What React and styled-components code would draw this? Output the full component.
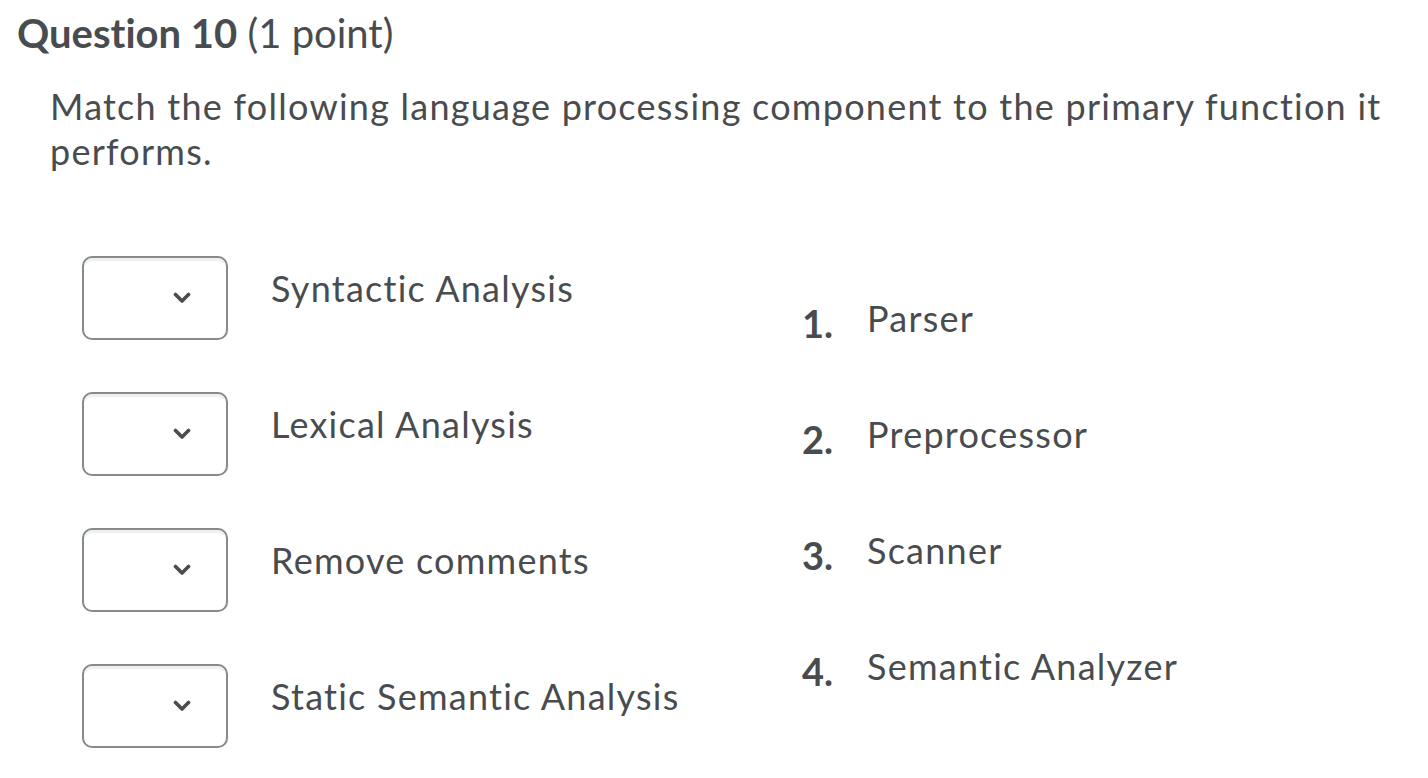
import React from "react";
import styled, { createGlobalStyle } from "styled-components";

const GlobalStyle = createGlobalStyle`
  body {
    margin: 0;
    background: #ffffff;
    color: #494c4e;
    font-family: Lato, "Open Sans", sans-serif;
    font-variant-ligatures: none;
  }
`;

const choices = [
  "Syntactic Analysis",
  "Lexical Analysis",
  "Remove comments",
  "Static Semantic Analysis",
];

const answers = ["Parser", "Preprocessor", "Scanner", "Semantic Analyzer"];

function Chevron() {
  return (
    <svg width="18" height="12" viewBox="0 0 18 12">
      <path
        d="M2.5 2.5 L9 9 L15.5 2.5"
        fill="none"
        stroke="#494c4e"
        strokeWidth="3.6"
        strokeLinecap="round"
        strokeLinejoin="round"
      />
    </svg>
  );
}

function App() {
  return (
    <Page>
      <GlobalStyle />
      <Title>
        <strong>Question 10</strong> (1 point)
      </Title>
      <Prompt>
        Match the following language processing component to the primary
        function it performs.
      </Prompt>
      <MatchArea>
        <Choices>
          {choices.map((text) => (
            <ChoiceRow key={text}>
              <SelectBox>
                <Chevron />
              </SelectBox>
              <ChoiceLabel>{text}</ChoiceLabel>
            </ChoiceRow>
          ))}
        </Choices>
        <Answers>
          {answers.map((text, i) => (
            <AnswerItem key={text}>
              <AnswerNumber>{i + 1}.</AnswerNumber>
              {text}
            </AnswerItem>
          ))}
        </Answers>
      </MatchArea>
    </Page>
  );
}

export default App;

const Page = styled.div`
  padding: 9px 0 0 17px;
`;

const Title = styled.h2`
  margin: 0;
  font-size: 40px;
  line-height: 48px;
  font-weight: 400;

  strong {
    font-weight: 700;
  }
`;

const Prompt = styled.p`
  margin: 27px 0 0 33px;
  max-width: 1370px;
  font-size: 36px;
  line-height: 45px;
  letter-spacing: 1.25px;
`;

const MatchArea = styled.div`
  display: grid;
  grid-template-columns: 720px 1fr;
  margin-top: 82px;
  padding-left: 65px;
`;

const Choices = styled.div`
  display: flex;
  flex-direction: column;
  gap: 52px;
`;

const ChoiceRow = styled.div`
  display: flex;
  align-items: flex-start;
  height: 84px;
`;

const SelectBox = styled.div`
  box-sizing: border-box;
  width: 146px;
  height: 84px;
  border: 2px solid #868a8d;
  border-radius: 10px;
  box-shadow: inset 0 3px 0 #eef0f1;
  background: #ffffff;
  display: flex;
  align-items: center;
  justify-content: flex-end;
  padding-right: 35px;
  flex-shrink: 0;
`;

const ChoiceLabel = styled.div`
  margin: 10px 0 0 43px;
  font-size: 36px;
  line-height: 45px;
  letter-spacing: 1.25px;
  white-space: nowrap;
`;

const Answers = styled.ol`
  list-style: none;
  margin: 40px 0 0;
  padding: 0;
`;

const AnswerItem = styled.li`
  height: 45px;
  font-size: 36px;
  line-height: 45px;
  letter-spacing: 1.25px;
  margin-bottom: 71px;
  white-space: nowrap;
`;

const AnswerNumber = styled.span`
  display: inline-block;
  width: 65px;
  font-size: 38px;
  font-weight: 700;
  letter-spacing: 0;
  vertical-align: -6px;
`;
